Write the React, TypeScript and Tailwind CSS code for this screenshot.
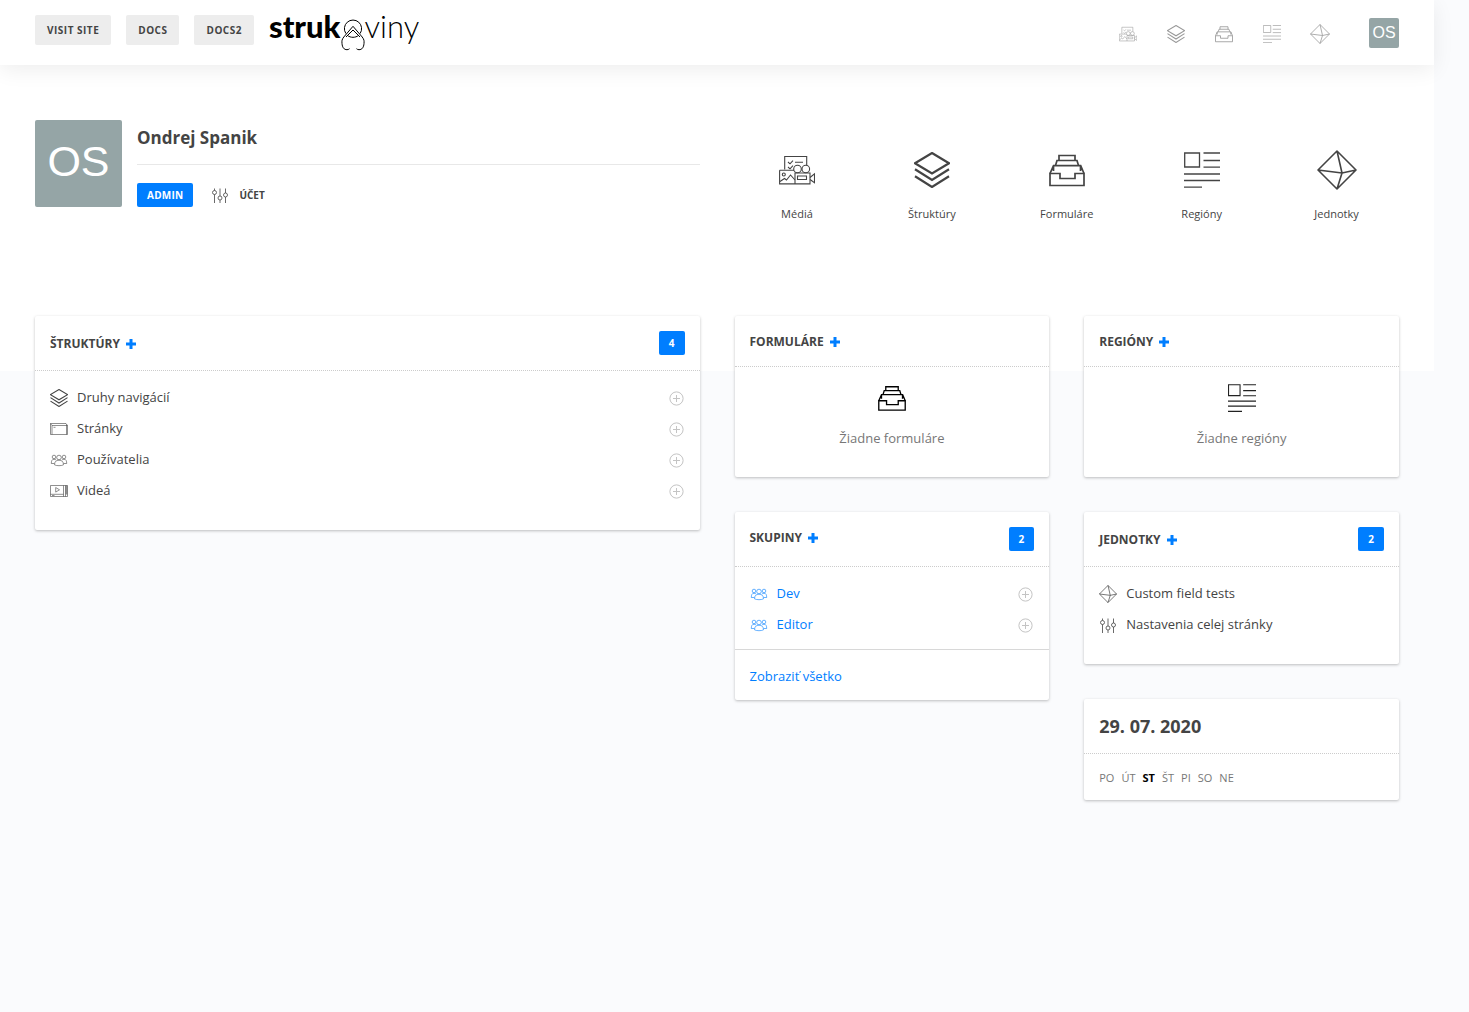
import React from "react";
import type { ReactNode } from "react";

type IconProps = { className?: string; strokeWidth?: number };

function Svg({ size, children, className, strokeWidth }: IconProps & { size: number; children: ReactNode }) {
  return (
    <svg
      viewBox={`0 0 ${size} ${size}`}
      fill="none"
      stroke="currentColor"
      strokeWidth={strokeWidth}
      className={className}
      aria-hidden="true"
    >
      {children}
    </svg>
  );
}

function Layers({ strokeWidth = 2.2, ...p }: IconProps) {
  return (
    <Svg size={36} strokeWidth={strokeWidth} {...p}>
      <path d="M18 1 35 11.3 18 21.5 1 11.3Z" />
      <path d="M1 17.2 18 28l17-10.800M1 24.300 18 35l17-10.700" />
    </Svg>
  );
}

function Tray({ strokeWidth = 1.7, ...p }: IconProps) {
  return (
    <Svg size={36} strokeWidth={strokeWidth} {...p}>
      <path d="M1 21.500h10v5h15v-5h9v12H1Z" />
      <path d="M1 21.500 4.500 13.700h27.200L35 21.500M4.500 19v-5.300M31.500 19v-5.300" />
      <path d="M6.500 13.500l1.500-5h20l1.500 5M10 8.500v-5h16v5" />
    </Svg>
  );
}

function Regions({ strokeWidth = 1.3, ...p }: IconProps) {
  return (
    <Svg size={36} strokeWidth={strokeWidth} {...p}>
      <path d="M.7 1h14.800v14H.7Z" />
      <path d="M19.500 1H36M19.500 8.500H36M19.500 15.200H36M0 22h36M0 28.500h36M0 35.200h18" />
    </Svg>
  );
}

function Octahedron({ strokeWidth = 1.6, ...p }: IconProps) {
  return (
    <Svg size={40} strokeWidth={strokeWidth} {...p}>
      <path strokeLinejoin="round" d="M20 1 39 20 20 39 1 20ZM20 1l5 22-5 16M1 20l24 3 14-3" />
    </Svg>
  );
}

function Media({ strokeWidth = 1.1, ...p }: IconProps) {
  return (
    <Svg size={36} strokeWidth={strokeWidth} {...p}>
      <path d="M5.700 17.500V4.500h22v8.700" />
      <path d="m9 10 2 1.800 3-3.200M16 10.300h8M9 15l2 1.800 3-3.200" />
      <circle cx="18.500" cy="17" r="3.800" />
      <circle cx="26.800" cy="17" r="3.800" />
      <path d="M.6 18.200h14.400M.6 18.200v13.700H31V21H16v11" />
      <circle cx="4.800" cy="22.500" r="1.500" />
      <path d="m1 29.500 4.500-3 2 1.500 4-5L16 28M18.500 24h9v3.500h-9ZM31 25.500l4.500-3.700v9L31 27.500" />
    </Svg>
  );
}

function Sliders({ strokeWidth = 0.8, ...p }: IconProps) {
  return (
    <Svg size={18} strokeWidth={strokeWidth} {...p}>
      <circle cx="3.500" cy="6.500" r="2" />
      <circle cx="9" cy="12" r="2" />
      <circle cx="14.500" cy="9" r="2" />
      <path d="M3.500 2.500v2M3.500 8.500V17M9 2.500V10M9 14v3M14.500 2.500V7M14.500 11v6" />
    </Svg>
  );
}

function Page(p: IconProps) {
  return (
    <Svg size={18} strokeWidth={0.6} {...p}>
      <path d="M.5 3.500h15.500l1.500 2v9H.5ZM2 5.500h15.500M2 5.500v9M.5 3.500 2 5.500M16.500 4.500v10M3.500 7.300h2" />
    </Svg>
  );
}

function Users(p: IconProps) {
  return (
    <Svg size={18} strokeWidth={0.6} {...p}>
      <circle cx="9" cy="6.500" r="2.300" />
      <circle cx="4" cy="6" r="1.800" />
      <circle cx="14" cy="6" r="1.800" />
      <path d="M4.500 13.800c0-3 1.500-4.600 4.500-4.600s4.500 1.600 4.500 4.600c-2 1.200-7 1.200-9 0Z" />
      <path d="M4.300 12.500H1.300C1.300 10 2 8.200 4 8.200c1 0 1.600.4 2 .9M13.700 12.500h3c0-2.500-.7-4.300-2.700-4.300-1 0-1.600.4-2 .9" />
    </Svg>
  );
}

function Video(p: IconProps) {
  return (
    <Svg size={18} strokeWidth={0.6} {...p}>
      <path d="M.5 3.500h17v11H.5ZM13.500 3.500v11M15.500 3.500v11M.5 12.300h13M2 13.500h2.500M5.700 5.500v4.600L9.500 7.800Z" />
      <path strokeWidth="1.600" d="M16.500 3.500v9" opacity=".6" />
    </Svg>
  );
}

function PlusCircle(p: IconProps) {
  return (
    <Svg size={16} strokeWidth={1} {...p}>
      <circle cx="7.500" cy="8.500" r="6.600" />
      <path d="M7.500 5v7M4 8.500h7" />
    </Svg>
  );
}

function Logo() {
  return (
    <a href="#home" aria-label="strukoviny" className="ml-[15px] flex h-[50px] items-start font-['Lato',sans-serif] text-[31px] leading-[52px] text-black">
      <span className="font-black">struk</span>
      <svg viewBox="0 0 24 52" fill="none" stroke="currentColor" strokeWidth="1" className="h-[52px] w-6 shrink-0" aria-hidden="true">
        <path d="M4.900 33.500a8.600 8.600 0 1 1 14.200 0M6.500 35.500c3.200 2.400 7.800 2.400 11 0" />
        <path d="M12 26.300 2.800 37C.8 39.500.8 41 1 43.500c.3 4 2 6.200 5 6.200 1 0 1.800-.3 2.500-1" />
        <path d="M12 26.300 21.200 37c2 2.500 2 4 1.800 6.500-.3 4-2 6.200-5 6.200-1 0-1.800-.3-2.500-1" />
        <path d="m5 37 7-7 7 7" />
      </svg>
      <span className="font-light">viny</span>
    </a>
  );
}

const sections = [
  { label: "Médiá", Icon: Media, big: "size-9", small: "size-[18px]" },
  { label: "Štruktúry", Icon: Layers, big: "size-9", small: "size-[18px]" },
  { label: "Formuláre", Icon: Tray, big: "size-9", small: "size-[18px]" },
  { label: "Regióny", Icon: Regions, big: "size-9", small: "size-[18px]" },
  { label: "Jednotky", Icon: Octahedron, big: "size-10", small: "size-5" },
];

function Header() {
  return (
    <header className="relative z-10 flex h-[65px] items-center justify-between bg-white px-[35px] shadow-[0_5px_20px_rgba(0,0,0,0.07)]">
      <div className="flex h-full items-start">
        <nav className="flex gap-[15px] pt-[15px]">
          {["Visit site", "Docs", "Docs2"].map((t) => (
            <a key={t} href="#docs" className="flex h-[30px] items-center rounded-xs bg-[#ededed] px-3 text-[10px] font-bold tracking-wider text-[#444] uppercase">
              {t}
            </a>
          ))}
        </nav>
        <Logo />
      </div>
      <div className="flex items-center">
        <nav className="mr-[25px] flex">
          {sections.map(({ label, Icon, small }) => (
            <a key={label} href="#section" aria-label={label} className="flex h-6 w-12 items-center justify-center pt-[2px] text-[#999]">
              <Icon className={small} />
            </a>
          ))}
        </nav>
        <a href="#account" className="flex size-[30px] items-center justify-center rounded-xs bg-[#95a5a6] font-['Liberation_Sans',sans-serif] text-base text-white">
          OS
        </a>
      </div>
    </header>
  );
}

function Hero() {
  return (
    <section className="grid h-[306px] grid-cols-2 gap-[35px] bg-white px-[35px] pt-[55px]">
      <div className="flex gap-[15px]">
        <div className="flex size-[87px] shrink-0 items-center justify-center rounded-xs bg-[#95a5a6] pb-1 font-['Liberation_Sans',sans-serif] text-[43px] text-white">
          OS
        </div>
        <div className="grow">
          <h1 className="h-[45px] border-b border-[#e8e8e8] pt-1 text-[17px] leading-7 font-bold text-[#444]">Ondrej Spanik</h1>
          <div className="mt-[18px] flex items-center text-[10px] font-bold text-[#444]">
            <span className="flex h-6 items-center rounded-xs bg-[#007eff] px-[10px] tracking-wide text-white">ADMIN</span>
            <a href="#account" className="ml-[18px] flex items-center gap-[10px]">
              <Sliders className="size-[18px]" />
              ÚČET
            </a>
          </div>
        </div>
      </div>
      <nav className="-mx-[5px] grid grid-cols-5 items-start pt-[30px]">
        {sections.map(({ label, Icon, big }) => (
          <a key={label} href="#section" className="flex flex-col items-center text-[11px] leading-4 text-[#444]">
            <span className="mb-4 flex h-10 items-center">
              <Icon className={big} />
            </span>
            {label}
          </a>
        ))}
      </nav>
    </section>
  );
}

function Card({ title, count, top, children }: { title: string; count?: number; top?: boolean; children: ReactNode }) {
  return (
    <section className="rounded-xs bg-white shadow-[0_1px_3px_rgba(0,0,0,0.25)]">
      <header className={`flex justify-between border-b border-dotted border-[#ccc] p-[15px] ${top ? "items-start" : "items-center"}`}>
        <h2 className="flex h-5 items-center gap-[6px] pt-px text-[12px] font-bold text-[#444] uppercase">
          {title}
          <button type="button" aria-label={`Pridať: ${title}`} className="text-[#007eff]">
            <svg viewBox="0 0 10 10" className="size-[10px]" fill="none" stroke="currentColor" strokeWidth="3" aria-hidden="true">
              <path d="M5 0v10M0 5h10" />
            </svg>
          </button>
        </h2>
        {count !== undefined && (
          <span className="flex h-6 items-center rounded-xs bg-[#007eff] px-[10px] text-[10px] font-bold text-white">{count}</span>
        )}
      </header>
      {children}
    </section>
  );
}

type Item = { label: string; Icon: (p: IconProps) => ReactNode };

function List({ items, add, blue }: { items: Item[]; add?: boolean; blue?: boolean }) {
  return (
    <ul className={`px-[15px] pt-[11px] text-[13px] ${blue ? "pb-[9px] text-[#007eff]" : "pb-6 text-[#444]"}`}>
      {items.map(({ label, Icon }) => (
        <li key={label} className="flex h-[31px] items-center justify-between">
          <a href="#item" className="flex items-center gap-[9px]">
            <Icon className="size-[18px]" />
            {label}
          </a>
          {add && (
            <button type="button" aria-label={`Pridať: ${label}`} className="text-[#c4c4c4]">
              <PlusCircle className="size-4" />
            </button>
          )}
        </li>
      ))}
    </ul>
  );
}

function Empty({ children, label }: { children: ReactNode; label: string }) {
  return (
    <div className="flex flex-col items-center pt-4 pb-[29px]">
      <span className="flex h-[30px] items-center">{children}</span>
      <p className="mt-[15px] text-[13px] leading-5 text-[#777]">{label}</p>
    </div>
  );
}

export default function App() {
  return (
    <div className="min-h-screen bg-[#fafbfd] pr-[35px] font-['Segoe_UI','Open_Sans',sans-serif]">
      <Header />
      <Hero />
      <main className="relative -mt-[55px] grid grid-cols-4 items-start gap-[35px] px-[35px] pb-10">
        <div className="col-span-2">
          <Card title="Štruktúry" count={4}>
            <List
              add
              items={[
                { label: "Druhy navigácií", Icon: Layers },
                { label: "Stránky", Icon: Page },
                { label: "Používatelia", Icon: Users },
                { label: "Videá", Icon: Video },
              ]}
            />
          </Card>
        </div>
        <div className="flex flex-col gap-[35px]">
          <Card title="Formuláre">
            <Empty label="Žiadne formuláre">
              <Tray className="size-7 text-black" strokeWidth={1.7} />
            </Empty>
          </Card>
          <Card title="Skupiny" count={2} top>
            <List
              add
              blue
              items={[
                { label: "Dev", Icon: Users },
                { label: "Editor", Icon: Users },
              ]}
            />
            <footer className="flex h-[51px] items-center border-t border-[#d8d8d8] px-[15px] pt-[3px]">
              <a href="#all" className="text-[13px] text-[#007eff]">
                Zobraziť všetko
              </a>
            </footer>
          </Card>
        </div>
        <div className="flex flex-col gap-[35px]">
          <Card title="Regióny">
            <Empty label="Žiadne regióny">
              <Regions className="size-7 text-[#222]" strokeWidth={1.4} />
            </Empty>
          </Card>
          <Card title="Jednotky" count={2}>
            <List
              items={[
                { label: "Custom field tests", Icon: Octahedron },
                { label: "Nastavenia celej stránky", Icon: Sliders },
              ]}
            />
          </Card>
          <section className="rounded-xs bg-white shadow-[0_1px_3px_rgba(0,0,0,0.25)]">
            <h2 className="flex h-[55px] items-center border-b border-dotted border-[#ccc] px-[15px] text-[18px] font-bold text-[#444]">29. 07. 2020</h2>
            <ol className="flex h-[46px] items-center gap-[7px] px-[15px] pt-[2px] text-[11px] text-[#777]">
              {["PO", "ÚT", "ST", "ŠT", "PI", "SO", "NE"].map((d) => (
                <li key={d} className={d === "ST" ? "font-bold text-black" : ""}>
                  {d}
                </li>
              ))}
            </ol>
          </section>
        </div>
      </main>
    </div>
  );
}
